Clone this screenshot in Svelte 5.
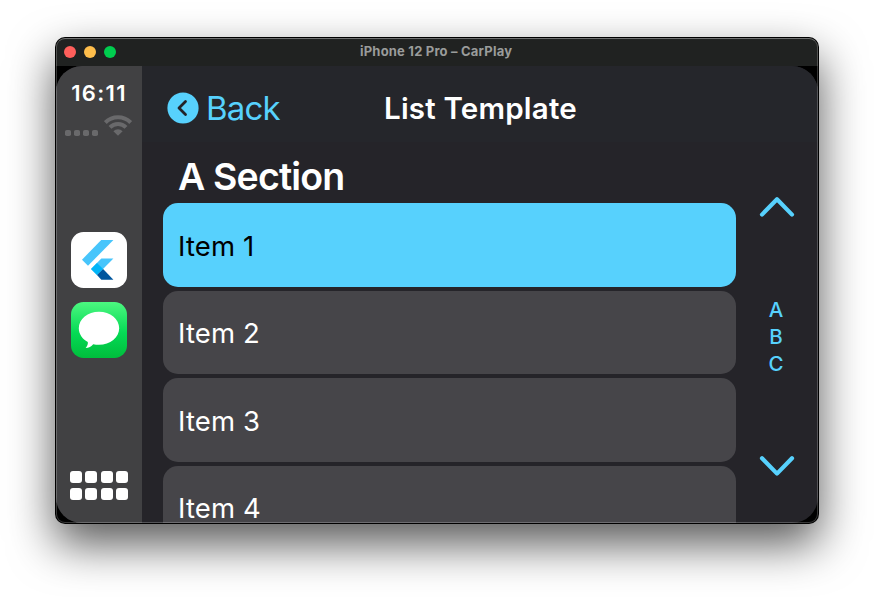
<script>
  const items = ['Item 1', 'Item 2', 'Item 3', 'Item 4'];
  const letters = ['A', 'B', 'C'];
  let selected = $state(0);
</script>

<div class="desktop">
  <div class="window">
    <header class="titlebar">
      <div class="lights"><i class="red"></i><i class="yellow"></i><i class="green"></i></div>
      <span class="caption">iPhone 12 Pro – CarPlay</span>
    </header>
    <div class="bezel">
      <div class="screen">
        <aside>
          <div class="time">16:11</div>
          <div class="status">
            <div class="signal"><i></i><i></i><i></i><i></i></div>
            <svg width="28" height="21" viewBox="0 0 28 21">
              <g fill="none" stroke="#69696b" stroke-width="4">
                <path d="M1.3 7.6a18 18 0 0 1 25.4 0" />
                <path d="M6 12.4a11.3 11.3 0 0 1 16 0" />
              </g>
              <path d="M9.4 16.2a6.6 6.6 0 0 1 9.2 0L14 20.7z" fill="#69696b" />
            </svg>
          </div>
          <svg class="app flutter" width="56" height="56" viewBox="0 0 56 56">
            <rect width="56" height="56" rx="12.5" fill="#fff" />
            <path d="M30.2 8H42.4L17 33.8L11 27.7z" fill="#47c5fb" />
            <path d="M30.3 26.5H42.4L32 37L26 43L20 37z" fill="#47c5fb" />
            <path d="M26 30.9L32.1 37L26 43L20 37z" fill="#00b5f8" />
            <path d="M26 43L32.1 37L42.4 47.7H30.3z" fill="#00569e" />
          </svg>
          <svg class="app" width="56" height="56" viewBox="0 0 56 56">
            <defs>
              <linearGradient id="msg" x1="0" y1="0" x2="0" y2="1">
                <stop offset="0" stop-color="#4cf780" />
                <stop offset=".55" stop-color="#05da55" />
                <stop offset="1" stop-color="#00bd3c" />
              </linearGradient>
            </defs>
            <rect width="56" height="56" rx="12.5" fill="url(#msg)" />
            <path d="M28 9.7C16.8 9.7 7.8 17 7.8 26.2C7.8 32 11.4 37 16.8 40C17.2 42.2 16 44.6 14.6 46C17.6 46 20.6 44.4 22.2 42.2C24 42.6 26 42.8 28 42.8C39.2 42.8 48.2 35.4 48.2 26.2S39.2 9.7 28 9.7z" fill="#fff" />
          </svg>
          <div class="grid">{#each Array(8) as _}<i></i>{/each}</div>
        </aside>
        <main>
          <nav>
            <button class="back">
              <svg width="32" height="32" viewBox="0 0 32 32">
                <circle cx="16" cy="16" r="15.6" fill="#57d1fd" />
                <path d="M18.5 9.6L12 16l6.5 6.4" fill="none" stroke="#222329" stroke-width="2.8" stroke-linecap="round" stroke-linejoin="round" />
              </svg>
              <span>Back</span>
            </button>
            <h1>List Template</h1>
          </nav>
          <div class="body">
            <section>
              <h2>A Section</h2>
              <div class="list">
                {#each items as item, i}
                  <button class="row" class:selected={i === selected} onclick={() => (selected = i)}>
                    <span>{item}</span>
                  </button>
                {/each}
              </div>
            </section>
            <div class="index">
              <svg width="36" height="22" viewBox="0 0 36 22"><path d="M3 18.6L18 3.2L33 18.6" /></svg>
              <div class="letters">{#each letters as letter}<span>{letter}</span>{/each}</div>
              <svg width="36" height="22" viewBox="0 0 36 22"><path d="M3 3.2L18 18.6L33 3.2" /></svg>
            </div>
          </div>
        </main>
      </div>
    </div>
  </div>
</div>

<style>
  :global(body) { margin: 0; background: #fff; }
  * { box-sizing: border-box; }
  i { display: block; }
  svg { display: block; flex: none; }
  button { border: 0; padding: 0; background: none; text-align: left; font: inherit; }
  h1, h2 { margin: 0; white-space: nowrap; }
  .desktop {
    width: 874px;
    height: 597px;
    padding: 37px 55px 0;
    overflow: hidden;
    font-family: Inter, "Liberation Sans", sans-serif;
  }
  .window {
    position: relative;
    width: 764px;
    height: 487px;
    padding: 1px;
    border-radius: 10px;
    background: #000;
    box-shadow: 0 20px 46px rgba(0, 0, 0, 0.66);
  }
  /* hairline highlight just inside the black window edge */
  .window::after {
    content: "";
    position: absolute;
    inset: 1px;
    border: 1px solid rgba(255, 255, 255, 0.22);
    border-top-color: rgba(255, 255, 255, 0.36);
    border-radius: 9px;
    pointer-events: none;
  }
  .titlebar {
    display: flex;
    align-items: center;
    height: 28px;
    border-radius: 9px 9px 0 0;
    background: #202221;
  }
  .lights { display: flex; gap: 8px; width: 304px; padding-left: 8px; }
  .lights i { width: 12px; height: 12px; border-radius: 50%; }
  .red { background: #ff5f5b; }
  .yellow { background: #ffbe4b; }
  .green { background: #00ce4f; }
  .caption { margin-top: -1px; color: #9a9c9b; font-size: 13px; font-weight: 700; white-space: nowrap; line-height: 27px; letter-spacing: 0.2px; }
  .bezel { height: 457px; background: #000; border-radius: 0 0 9px 9px; overflow: hidden; }
  .screen { display: flex; height: 457px; border-radius: 26px; overflow: hidden; background: #252429; }
  aside {
    display: flex;
    flex-direction: column;
    align-items: center;
    width: 86px;
    background: #414143;
  }
  .time { margin: 13px 0 0; color: #fff; font-size: 22px; line-height: 28px; font-weight: 600; letter-spacing: 1.3px; }
  .status { display: flex; align-items: flex-end; gap: 6px; height: 21px; margin-top: 8px; margin-right: 1px; }
  .signal { display: flex; gap: 2.8px; }
  .signal i { width: 6px; height: 6px; border-radius: 1.8px; background: #69696b; }
  .app { margin-top: 14px; }
  .flutter { margin-top: 95.6px; }
  .grid { display: grid; grid-template-columns: repeat(4, 12px); gap: 5px 3.3px; margin-top: 113.6px; }
  .grid i { height: 12px; border-radius: 3px; background: #fff; }
  main { flex: 1; display: flex; flex-direction: column; min-width: 0; }
  nav {
    display: flex;
    align-items: center;
    height: 76px;
    padding: 8px 0 0 25px;
    background: #25262b;
  }
  .back { display: flex; align-items: center; gap: 7px; width: 217px; color: #57d1fd; font-size: 33px; line-height: 40px; letter-spacing: -0.8px; }
  h1 { color: #fff; font-size: 29.5px; line-height: 40px; font-weight: 600; letter-spacing: 0.2px; }
  .body { flex: 1; display: flex; min-height: 0; }
  section { width: 594px; padding-left: 21px; }
  h2 { height: 61.4px; padding: 11px 0 0 15px; color: #fff; font-size: 37.5px; line-height: 48px; font-weight: 600; letter-spacing: -0.85px; }
  .list { display: flex; flex-direction: column; gap: 4px; }
  .row { display: flex; align-items: center; flex: none; height: 83.5px; padding: 1px 0 0 15px; border-radius: 15px; background: #464549; color: #fff; font-size: 27.5px; letter-spacing: 0.15px; }
  .row.selected { background: #57d1fd; color: #000; }
  .index { display: flex; flex-direction: column; align-items: center; flex: 1; padding: 54px 0 0; }
  .index path { fill: none; stroke: #57d1fd; stroke-width: 4.2; stroke-linecap: round; stroke-linejoin: round; }
  .letters { display: flex; flex-direction: column; align-items: center; height: 157.6px; margin: 79.4px 2px 0 0; color: #57d1fd; font-size: 20.5px; font-weight: 550; line-height: 26.7px; }
</style>
